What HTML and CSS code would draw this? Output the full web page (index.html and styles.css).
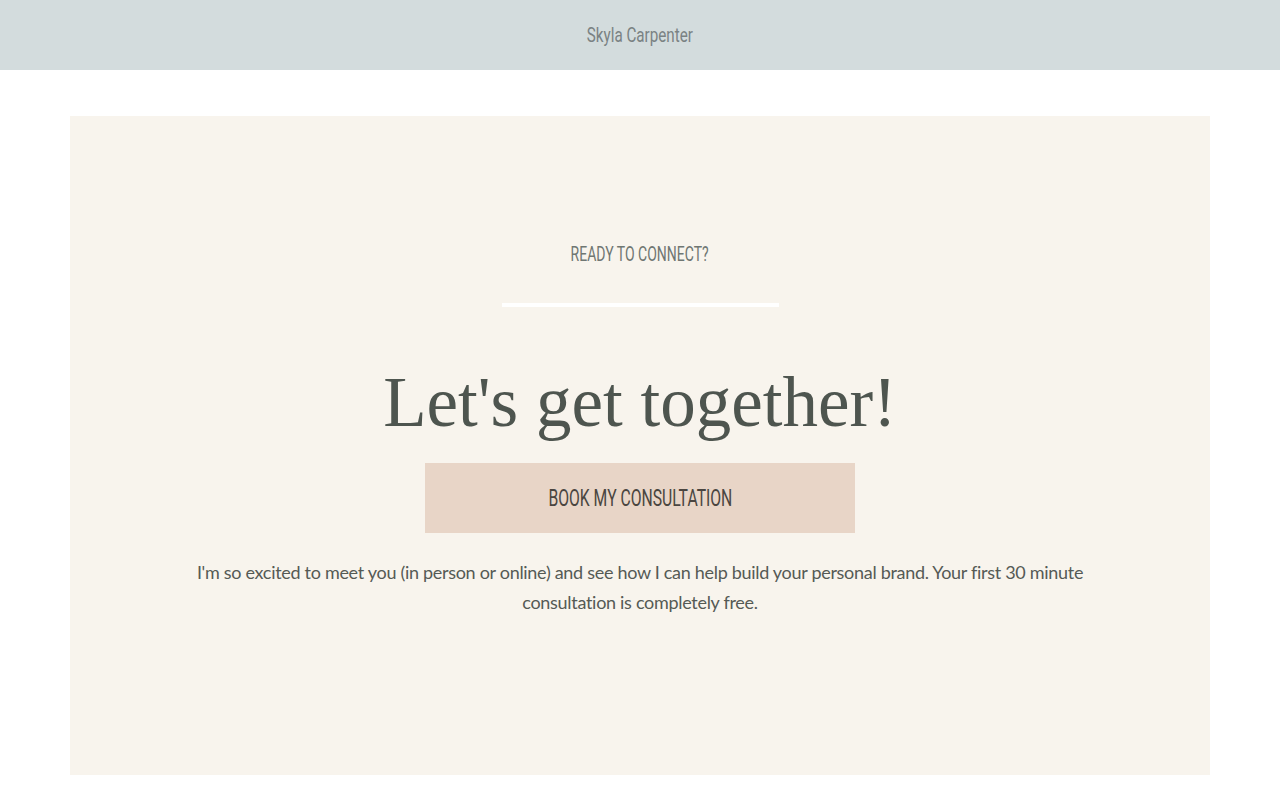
FILE: index.html
```html
<!DOCTYPE html>
<html lang="en">
<head>
<meta charset="utf-8">
<title>Skyla Carpenter</title>
<link rel="stylesheet" href="styles.css">
</head>
<body>
<header class="site-header">
  <span class="brand condensed">Skyla Carpenter</span>
</header>
<main class="page">
  <section class="cta-card">
    <span class="eyebrow condensed">READY TO CONNECT?</span>
    <div class="divider"></div>
    <h1 class="headline">Let's get together!</h1>
    <a class="book-btn" href="#"><span class="btn-label condensed">BOOK MY CONSULTATION</span></a>
    <p class="lead">I'm so excited to meet you (in person or online) and see how I can help build your personal brand. Your first 30 minute consultation is completely free.</p>
  </section>
</main>
</body>
</html>
```

FILE: styles.css
```css
html, body {
  margin: 0;
  padding: 0;
  background: #ffffff;
}
body {
  font-family: Roboto, "Liberation Sans", sans-serif;
}
.condensed {
  display: inline-block;
  font-family: Roboto, "Liberation Sans", sans-serif;
  transform: scaleX(0.76);
  transform-origin: center;
  white-space: nowrap;
}
.site-header {
  height: 70px;
  background: #d3dcdd;
  display: flex;
  align-items: center;
  justify-content: center;
}
.brand {
  font-size: 20px;
  color: #7a8283;
}
.page {
  padding: 46px 70px 35px;
}
.cta-card {
  background: #f8f4ed;
  height: 659px;
  box-sizing: border-box;
  padding-top: 124px;
  display: flex;
  flex-direction: column;
  align-items: center;
}
.eyebrow {
  font-size: 20px;
  line-height: 28px;
  color: #6f7672;
  transform: scaleX(0.70);
}
.divider {
  width: 277px;
  height: 4px;
  background: #ffffff;
  margin-top: 35px;
}
.headline {
  font-family: "Liberation Serif", "DejaVu Serif", serif;
  font-weight: normal;
  font-size: 71px;
  line-height: 90px;
  color: #4e554f;
  margin: 50px 0 0;
}
.book-btn {
  display: flex;
  align-items: center;
  justify-content: center;
  width: 430px;
  height: 70px;
  margin-top: 16px;
  background: #e8d5c7;
  color: #4a4540;
  text-decoration: none;
  font-size: 24px;
}
.btn-label {
  transform: scaleX(0.655);
}
.lead {
  font-family: Lato, "Open Sans", sans-serif;
  font-size: 18px;
  line-height: 30px;
  letter-spacing: -0.3px;
  color: #555a55;
  text-align: center;
  max-width: 900px;
  margin: 24px 0 0;
}
```
